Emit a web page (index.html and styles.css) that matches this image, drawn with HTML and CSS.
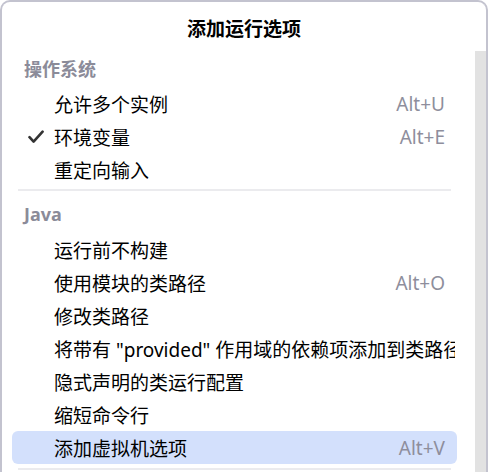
FILE: index.html
```html
<!DOCTYPE html>
<html lang="zh-CN">

<head>
    <meta charset="UTF-8" />
    <title>添加运行选项</title>
    <link rel="stylesheet" href="styles.css">
</head>

<body>
    <div class="popup">
        <div class="popup-title">添加运行选项</div>
        <div class="popup-body">
            <div class="menu-list">
                <div class="group-title">操作系统</div>
                <div class="menu-item">
                    <span class="mark"></span>
                    <span class="label">允许多个实例</span>
                    <span class="shortcut">Alt+U</span>
                </div>
                <div class="menu-item">
                    <span class="mark">
                        <svg width="16" height="14" viewBox="0 0 16 14">
                            <path d="M1.5 7.2 L5.6 11.6 L14.6 1.6" fill="none" stroke="#333" stroke-width="2.6" stroke-linecap="round" stroke-linejoin="round"/>
                        </svg>
                    </span>
                    <span class="label">环境变量</span>
                    <span class="shortcut">Alt+E</span>
                </div>
                <div class="menu-item">
                    <span class="mark"></span>
                    <span class="label">重定向输入</span>
                </div>

                <div class="separator"></div>

                <div class="group-title java">Java</div>
                <div class="menu-item">
                    <span class="mark"></span>
                    <span class="label">运行前不构建</span>
                </div>
                <div class="menu-item">
                    <span class="mark"></span>
                    <span class="label">使用模块的类路径</span>
                    <span class="shortcut">Alt+O</span>
                </div>
                <div class="menu-item">
                    <span class="mark"></span>
                    <span class="label">修改类路径</span>
                </div>
                <div class="menu-item">
                    <span class="mark"></span>
                    <span class="label">将带有 "provided" 作用域的依赖项添加到类路径</span>
                </div>
                <div class="menu-item">
                    <span class="mark"></span>
                    <span class="label">隐式声明的类运行配置</span>
                </div>
                <div class="menu-item">
                    <span class="mark"></span>
                    <span class="label">缩短命令行</span>
                </div>
                <div class="menu-item selected">
                    <span class="mark"></span>
                    <span class="label">添加虚拟机选项</span>
                    <span class="shortcut">Alt+V</span>
                </div>

                <div class="separator bottom"></div>
            </div>
            <div class="scrollbar"></div>
        </div>
    </div>
</body>

</html>
```

FILE: styles.css
```css
/* 全局字体 */

* {
    box-sizing: border-box;
    font-family: "Noto Sans", "Noto Sans CJK SC", sans-serif;
}

body {
    margin: 0;
    background: white;
    height: 472px;
    overflow: hidden;
}
/* 弹出窗口 */

.popup {
    width: 488px;
    height: 472px;
    border: 2px solid #c3c3cf;
    border-bottom: none;
    border-radius: 10px 10px 0 0;
    background: white;
    display: flex;
    flex-direction: column;
}

.popup-title {
    height: 49px;
    flex-shrink: 0;
    display: flex;
    justify-content: center;
    align-items: center;
    font-size: 19px;
    font-weight: bold;
    color: #000;
    padding-top: 2px;
}

.popup-body {
    flex: 1;
    min-height: 0;
    display: flex;
    overflow: hidden;
}
/* 菜单列表 */

.menu-list {
    flex: 1;
    min-width: 0;
    overflow: hidden;
    padding: 0 18px 0 10px;
}

.group-title {
    height: 36px;
    line-height: 36px;
    padding-left: 12px;
    font-size: 18px;
    font-weight: bold;
    color: #8b8b99;
}

.group-title.java {
    height: 38px;
    line-height: 38px;
}

.menu-item {
    height: 33px;
    display: flex;
    align-items: center;
    padding-right: 2px;
    border-radius: 6px;
    font-size: 19px;
    color: #000;
}

.menu-item .mark {
    width: 42px;
    flex-shrink: 0;
    display: flex;
    align-items: center;
    padding-left: 16px;
}

.menu-item .label {
    min-width: 0;
    overflow: hidden;
    white-space: nowrap;
}

.menu-item .shortcut {
    margin-left: auto;
    margin-right: 10px;
    padding-left: 12px;
    color: #8e8e9c;
    white-space: nowrap;
}

.menu-item.selected {
    background: #d3e0fc;
}

.separator {
    height: 2px;
    margin: 3px 6px 4px;
    background: #ebebee;
}

.separator.bottom {
    margin-top: 4px;
}
/* 滚动条 */

.scrollbar {
    width: 11px;
    flex-shrink: 0;
    background: #e2e2e2;
}
```
